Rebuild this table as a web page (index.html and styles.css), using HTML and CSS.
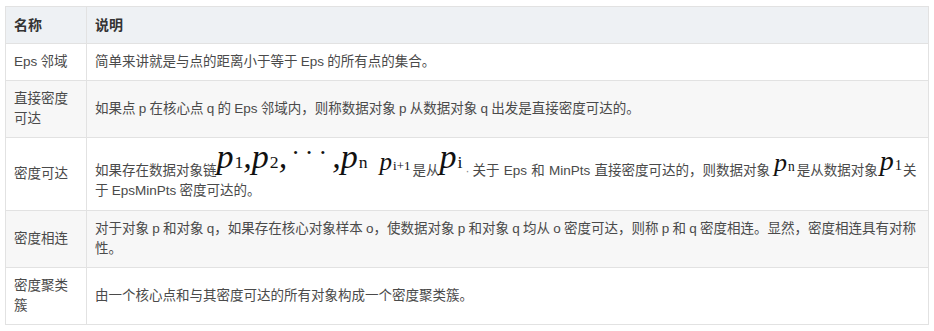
FILE: index.html
```html
<!DOCTYPE html>
<html lang="zh">
<head>
<meta charset="utf-8">
<link rel="stylesheet" href="styles.css">
</head>
<body>
<table class="tbl">
  <thead>
    <tr><th class="c1">名称</th><th>说明</th></tr>
  </thead>
  <tbody>
    <tr><td class="c1">Eps 邻域</td><td>简单来讲就是与点的距离小于等于 Eps 的所有点的集合。</td></tr>
    <tr class="alt"><td class="c1">直接密度可达</td><td>如果点 p 在核心点 q 的 Eps 邻域内，则称数据对象 p 从数据对象 q 出发是直接密度可达的。</td></tr>
    <tr class="r3"><td class="c1">密度可达</td><td><span class="sm">如果存在数据对象链</span><span class="m big">p<sub>1</sub>,p<sub>2</sub>,<span class="dots">···</span>,p<sub>n</sub></span><span class="m mid">p<sub>i+1</sub></span><span class="sm">是从</span><span class="m big">p<sub>i</sub></span><span class="dot">·</span><span class="wide">关于 Eps 和 MinPts 直接密度可达的，则数据对象</span><span class="m sml">p<sub>n</sub></span>是从数据对象<span class="m sml2">p<sub>1</sub></span>关于 EpsMinPts 密度可达的。</td></tr>
    <tr class="alt"><td class="c1">密度相连</td><td>对于对象 p 和对象 q，如果存在核心对象样本 o，使数据对象 p 和对象 q 均从 o 密度可达，则称 p 和 q 密度相连。显然，密度相连具有对称性。</td></tr>
    <tr><td class="c1">密度聚类簇</td><td>由一个核心点和与其密度可达的所有对象构成一个密度聚类簇。</td></tr>
  </tbody>
</table>
</body>
</html>
```

FILE: styles.css
```css
html, body {
  margin: 0;
  padding: 0;
  background: #fff;
}
body {
  font-family: "Liberation Sans", "Noto Sans CJK SC", sans-serif;
  font-size: 13.5px;
  color: #4a4a4a;
}
.tbl {
  margin: 6px 0 0 5px;
  width: 924px;
  border-collapse: collapse;
  table-layout: fixed;
}
.tbl th, .tbl td {
  border: 1px solid #e2e2e2;
  padding: 8px 7px 8px 8px;
  line-height: 20px;
  text-align: left;
  vertical-align: middle;
  word-spacing: -0.5px;
}
.tbl th {
  background: #eef1f4;
  color: #333;
  font-weight: bold;
  font-size: 14px;
}
.tbl .c1 {
  width: 65px;
}
.tbl tr.alt td {
  background: #f7f7f7;
}
.tbl td {
  height: 20px;
}
.tbl tr.r3 td {
  height: 57px;
  padding-top: 7px;
}
.sm {
  font-size: 13.5px;
}
.wide {
  word-spacing: 0.5px;
}
.m {
  font-family: "Liberation Serif", serif;
  font-style: italic;
  color: #111;
  line-height: 20px;
  vertical-align: 7px;
  word-spacing: 0;
}
.m sub {
  font-style: normal;
  font-size: 52%;
  vertical-align: baseline;
  margin-left: 1px;
}
.big {
  font-size: 34px;
}
.mid {
  font-size: 25px;
  margin-left: 12px;
  margin-right: 2px;
  vertical-align: 5px;
}
.sml {
  font-size: 26px;
  vertical-align: 4px;
  margin: 0 2px 0 4px;
}
.sml2 {
  font-size: 28px;
  vertical-align: 5px;
  margin: 0 1px 0 2px;
}
.dots {
  font-style: normal;
  font-size: 26px;
  position: relative;
  top: -7px;
  letter-spacing: 5px;
  margin-left: 4px;
}
.dot {
  font-size: 12px;
  color: #888;
  margin: 0 3px 0 3px;
}
```
